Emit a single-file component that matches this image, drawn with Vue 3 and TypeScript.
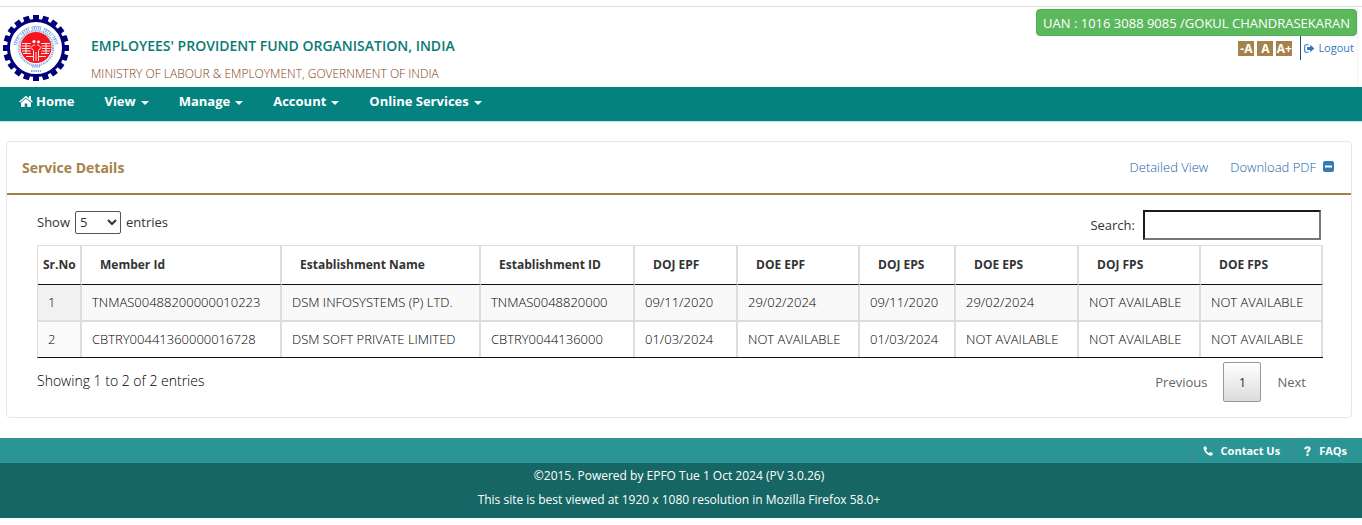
<script setup lang="ts">
import { ref, computed } from 'vue'

interface Column {
  label: string
  share: number
}

const menus: string[] = ['View', 'Manage', 'Account', 'Online Services']

const columns: Column[] = [
  { label: 'Sr.No', share: 44 },
  { label: 'Member Id', share: 200 },
  { label: 'Establishment Name', share: 199 },
  { label: 'Establishment ID', share: 154 },
  { label: 'DOJ EPF', share: 103 },
  { label: 'DOE EPF', share: 122 },
  { label: 'DOJ EPS', share: 96 },
  { label: 'DOE EPS', share: 123 },
  { label: 'DOJ FPS', share: 122 },
  { label: 'DOE FPS', share: 122 },
]
const totalShare = columns.reduce((sum, c) => sum + c.share, 0)

const rows: string[][] = [
  ['1', 'TNMAS00488200000010223', 'DSM INFOSYSTEMS (P) LTD.', 'TNMAS0048820000', '09/11/2020', '29/02/2024', '09/11/2020', '29/02/2024', 'NOT AVAILABLE', 'NOT AVAILABLE'],
  ['2', 'CBTRY00441360000016728', 'DSM SOFT PRIVATE LIMITED', 'CBTRY0044136000', '01/03/2024', 'NOT AVAILABLE', '01/03/2024', 'NOT AVAILABLE', 'NOT AVAILABLE', 'NOT AVAILABLE'],
]

const pageSize = ref('5')
const query = ref('')
const visibleRows = computed(() =>
  rows.filter((r) => r.some((v) => v.toLowerCase().includes(query.value.toLowerCase()))),
)
const teeth = Array.from({ length: 20 }, (_, i) => i * 18)
</script>

<template>
  <div class="page">
    <header class="masthead">
      <svg class="logo" viewBox="0 0 68 68" aria-hidden="true">
        <rect v-for="a in teeth" :key="a" x="31" y="1" width="6" height="7" fill="#00007a" :transform="`rotate(${a} 34 34)`" />
        <circle cx="34" cy="34" r="27.5" fill="#fff" stroke="#00007a" stroke-width="3" />
        <g fill="none" stroke="#86aee6">
          <path d="M13 31A21.500 21.500 0 0 1 55 31" stroke-width="3.400" stroke-dasharray="1 1 1.500 1 .9 1.100 1.200 1 .8 2.800" />
          <path d="M13.500 27A21.700 21.700 0 0 1 54.500 27" stroke-width=".8" stroke-dasharray="9 3 8 3" />
          <circle cx="34" cy="34" r="17.200" stroke-width="2.200" stroke-dasharray="1 .8 1.400 .9" />
          <path d="M30 52.500h8M29 57h10" stroke-width="2.200" stroke-dasharray="1.400 .8" />
        </g>
        <circle cx="34" cy="33.500" r="15.500" fill="#f5141b" />
        <g fill="none" stroke="#fff" stroke-width=".9">
          <path d="M20 29.500h9M19.500 32h9M19.500 34.500h9M20 37h8.500M21 39.500h8M24 29v11M39 29.500h9M40 32h8.500M40 34.500h8.500M39.500 37h8.500M39 39.500h8M44 29v11" />
          <path d="M31.500 47V36.500L29 33.500l2.500-2.500h1.500M36.500 47V36.500l2.500-3-2.500-2.500h-1.500M34 38v9M24 42.500h7M37 42.500h7" />
        </g>
        <circle cx="32" cy="27.500" r="1.600" fill="#fff" />
        <circle cx="36.500" cy="28" r="1.400" fill="#fff" />
      </svg>
      <div class="titles">
        <h1>EMPLOYEES' PROVIDENT FUND ORGANISATION, INDIA</h1>
        <p>MINISTRY OF LABOUR &amp; EMPLOYMENT, GOVERNMENT OF INDIA</p>
      </div>
      <div class="account">
        <button class="uan" type="button">UAN : 1016 3088 9085 /GOKUL CHANDRASEKARAN</button>
        <div class="tools">
          <button class="size" type="button">-A</button>
          <button class="size" type="button">A</button>
          <button class="size" type="button">A+</button>
          <a class="logout" href="#">
            <svg class="logout-icon" viewBox="0 0 12 10" aria-hidden="true">
              <path d="M5 .8H2.200Q.7.800.7 2.300v5.400q0 1.500 1.500 1.500H5" fill="none" stroke="currentColor" stroke-width="1.200" />
              <path d="M3.300 3.300h3.400V.8L11.500 5 6.700 9.200V6.700H3.300z" fill="currentColor" />
            </svg>
            <span>Logout</span>
          </a>
        </div>
      </div>
    </header>

    <nav class="menu">
      <a class="home" href="#">
        <svg class="home-icon" viewBox="0 0 14 12" aria-hidden="true">
          <path d="M7 3.600 12 7.800v3.500q0 .7-.7.700H8.300V8.600H5.700V12h-3Q2 12 2 11.300V7.800z" fill="currentColor" />
          <path d="M.6 7 7 1.600 13.400 7" fill="none" stroke="currentColor" stroke-width="1.400" />
          <path d="M10 1h2v4.500L10 3.800z" fill="currentColor" />
        </svg>
        <span>Home</span>
      </a>
      <button v-for="m in menus" :key="m" type="button">{{ m }}<span class="caret"></span></button>
    </nav>

    <main class="panel">
      <div class="panel-head">
        <h2>Service Details</h2>
        <div class="links">
          <a href="#">Detailed View</a>
          <a href="#">Download PDF</a>
          <button class="collapse" type="button" aria-label="Collapse">
            <svg viewBox="0 0 11 11" aria-hidden="true">
              <rect width="11" height="11" rx="2" fill="#337ab7" />
              <rect x="2" y="4.500" width="7" height="2" fill="#fff" />
            </svg>
          </button>
        </div>
      </div>

      <div class="panel-body">
        <div class="controls">
          <label class="length">
            <span>Show</span>
            <select v-model="pageSize">
              <option>5</option>
              <option>10</option>
              <option>25</option>
            </select>
            <span>entries</span>
          </label>
          <label class="search">
            <span>Search:</span>
            <input v-model="query" type="search" />
          </label>
        </div>

        <table>
          <colgroup>
            <col v-for="c in columns" :key="c.label" :style="{ width: `${(c.share / totalShare) * 100}%` }" />
          </colgroup>
          <thead>
            <tr>
              <th v-for="c in columns" :key="c.label" scope="col">{{ c.label }}</th>
            </tr>
          </thead>
          <tbody>
            <tr v-for="r in visibleRows" :key="r[0]">
              <td v-for="(v, i) in r" :key="i">{{ v }}</td>
            </tr>
          </tbody>
        </table>

        <div class="summary">
          <span>Showing 1 to 2 of 2 entries</span>
          <div class="pager">
            <button type="button">Previous</button>
            <button class="current" type="button">1</button>
            <button type="button">Next</button>
          </div>
        </div>
      </div>
    </main>

    <footer>
      <div class="foot-links">
        <a href="#">
          <svg viewBox="0 0 10 10" aria-hidden="true">
            <path d="M2.300.2.700 1.100Q-.1 3.600 2.800 6.900q3.300 3.400 6 2.700l1.100-1.700-.3-.9-2.100-1-.7.2-.9 1.100Q4 6.200 3 4.200l1-1-.1-.8L3.100.4z" fill="currentColor" />
          </svg>
          <span>Contact Us</span>
        </a>
        <a href="#">
          <svg class="question" viewBox="0 0 7 10" aria-hidden="true">
            <path d="M1.100 3.200Q1.500 1.200 3.500 1.200t2.200 1.600Q5.700 4 4.500 4.700q-1 .6-1 2" fill="none" stroke="currentColor" stroke-width="2" />
            <rect x="2.400" y="7.700" width="2.200" height="2.200" fill="currentColor" />
          </svg>
          <span>FAQs</span>
        </a>
      </div>
      <div class="legal">
        <p>©2015. Powered by EPFO Tue 1 Oct 2024 (PV 3.0.26)</p>
        <p>This site is best viewed at 1920 x 1080 resolution in Mozilla Firefox 58.0+</p>
      </div>
    </footer>
  </div>
</template>

<style>
body {
  margin: 0;
  background: #fff;
}
</style>

<style scoped>
.page {
  padding-top: 6px;
  font: 13px/20px 'Open Sans', 'Noto Sans', sans-serif;
  color: #333;
}
.page *,
.page *::before {
  box-sizing: border-box;
}
button {
  font: inherit;
  color: inherit;
  background: none;
  border: 0;
  padding: 0;
  cursor: pointer;
}
a {
  color: #337ab7;
  text-decoration: none;
}
h1,
h2,
p {
  margin: 0;
}
svg {
  display: block;
  flex: none;
}
.masthead {
  display: flex;
  height: 81px;
  padding: 0 4px 0 2px;
  border-top: 1px solid #ddd;
}
.logo {
  width: 68px;
  height: 68px;
  margin-top: 7px;
}
.titles {
  margin-left: 21px;
  padding-top: 29px;
}
.titles h1 {
  font-size: 14px;
  line-height: 20px;
  font-weight: 600;
  color: #0b7a75;
}
.titles p {
  margin-top: 8px;
  font-size: 12px;
  font-weight: 300;
  color: #7d4010;
}
.account {
  display: flex;
  flex-direction: column;
  align-items: flex-end;
  margin-left: auto;
  padding-top: 2px;
  border-right: 1px solid #f2f2f2;
}
.uan {
  height: 27px;
  padding: 0 6px;
  border: 1px solid #4cae4c;
  border-radius: 4px;
  background: #5cb85c;
  color: #fff;
}
.tools {
  display: flex;
  gap: 3px;
  align-items: center;
}
.size {
  width: 16px;
  height: 15px;
  background: #a5824a;
  color: #fff;
  font-size: 12px;
  line-height: 15px;
  font-weight: 700;
}
.logout {
  display: flex;
  align-items: center;
  gap: 3px;
  height: 24px;
  margin-left: 5px;
  padding: 0 3px;
  border-left: 1px solid #1b4f80;
  font-size: 11px;
}
.logout-icon {
  width: 11px;
  height: 9px;
}
.menu {
  display: flex;
  height: 35px;
  padding: 0 19px 6px;
  gap: 30px;
  background: #04827f;
  border-bottom: 1px solid #bfe5e0;
  color: #fff;
  font-weight: 700;
}
.menu button,
.home {
  display: flex;
  align-items: center;
  color: #fff;
}
.home {
  gap: 3px;
}
.home-icon {
  width: 14px;
  height: 12px;
}
.caret {
  margin: 4px 0 0 5px;
  border: 4px solid transparent;
  border-top-color: #fff;
  border-bottom: 0;
}
.panel {
  margin: 19px 10px 20px 6px;
  border: 1px solid #e7e7e7;
  border-radius: 4px;
}
.panel-head {
  display: flex;
  align-items: center;
  justify-content: space-between;
  height: 53px;
  padding: 0 17px 0 15px;
  border-bottom: 2px solid #9d8149;
}
h2 {
  font-size: 14px;
  font-weight: 700;
  color: #a5824a;
}
.links {
  display: flex;
  align-items: center;
  padding-bottom: 2px;
  font-weight: 300;
}
.links a {
  margin-right: 22px;
  color: #1763a6;
}
.links a + a {
  margin-right: 7px;
}
.collapse svg {
  width: 11px;
  height: 11px;
}
.panel-body {
  padding: 15px 28px 15px 30px;
}
.controls {
  display: flex;
  justify-content: space-between;
  align-items: flex-start;
  height: 35px;
}
.length,
.search {
  display: flex;
  align-items: center;
  gap: 5px;
}
.length {
  height: 24px;
}
.search {
  gap: 8px;
  padding-right: 2px;
}
select {
  width: 46px;
  height: 23px;
  border: 1px solid #555;
  border-radius: 2px;
  background: #fff;
  color: #333;
  font: inherit;
}
input {
  width: 178px;
  height: 30px;
  border: 2px solid #767676;
  border-top-color: #1a1a1a;
  border-left-color: #1a1a1a;
  background: #fff;
  font: inherit;
}
table {
  width: 100%;
  table-layout: fixed;
  border-spacing: 0;
  border-top: 1px solid #ddd;
  border-left: 1px solid #ddd;
  border-bottom: 1px solid #111;
}
th {
  height: 39px;
  padding: 0 0 0 18px;
  border-right: 2px solid #ddd;
  border-bottom: 1px solid #111;
  font-size: 12px;
  font-weight: 700;
  text-align: left;
  white-space: nowrap;
}
th:first-child {
  padding-left: 5px;
}
td {
  height: 35px;
  padding: 0 0 2px 10px;
  border-right: 2px solid #ddd;
  color: #000;
  font-weight: 300;
  white-space: nowrap;
}
tbody tr:nth-child(odd) td {
  height: 37px;
  border-bottom: 2px solid #ddd;
  background: #f9f9f9;
}
tbody tr td:first-child {
  background: #fafafa;
}
tbody tr:nth-child(odd) td:first-child {
  background: #f1f1f1;
}
.summary {
  display: flex;
  justify-content: space-between;
  align-items: flex-start;
  padding-top: 4px;
}
.summary > span {
  padding-top: 9px;
  color: #000;
  font-size: 14px;
  font-weight: 300;
}
.pager {
  display: flex;
  padding-right: 1px;
  color: #666;
}
.pager button {
  height: 40px;
  padding: 0 16px;
}
.pager .current {
  width: 38px;
  padding: 0;
  border: 1px solid #979797;
  border-radius: 2px;
  background: linear-gradient(#fff, #dcdcdc);
  color: #333;
}
.foot-links {
  display: flex;
  justify-content: flex-end;
  height: 25px;
  padding-right: 2px;
  background: #2a9594;
  font-size: 11px;
  font-weight: 700;
}
.foot-links a {
  display: flex;
  align-items: center;
  gap: 8px;
  padding: 0 13px 0 10px;
  border-left: 1px solid #4e8688;
  color: #fff;
}
.foot-links svg {
  width: 10px;
  height: 10px;
}
.foot-links .question {
  width: 7px;
}
.legal {
  padding: 1px 4px 6px 0;
  background: #156664;
  color: #fff;
  text-align: center;
  font-size: 12px;
  line-height: 24px;
}
</style>
